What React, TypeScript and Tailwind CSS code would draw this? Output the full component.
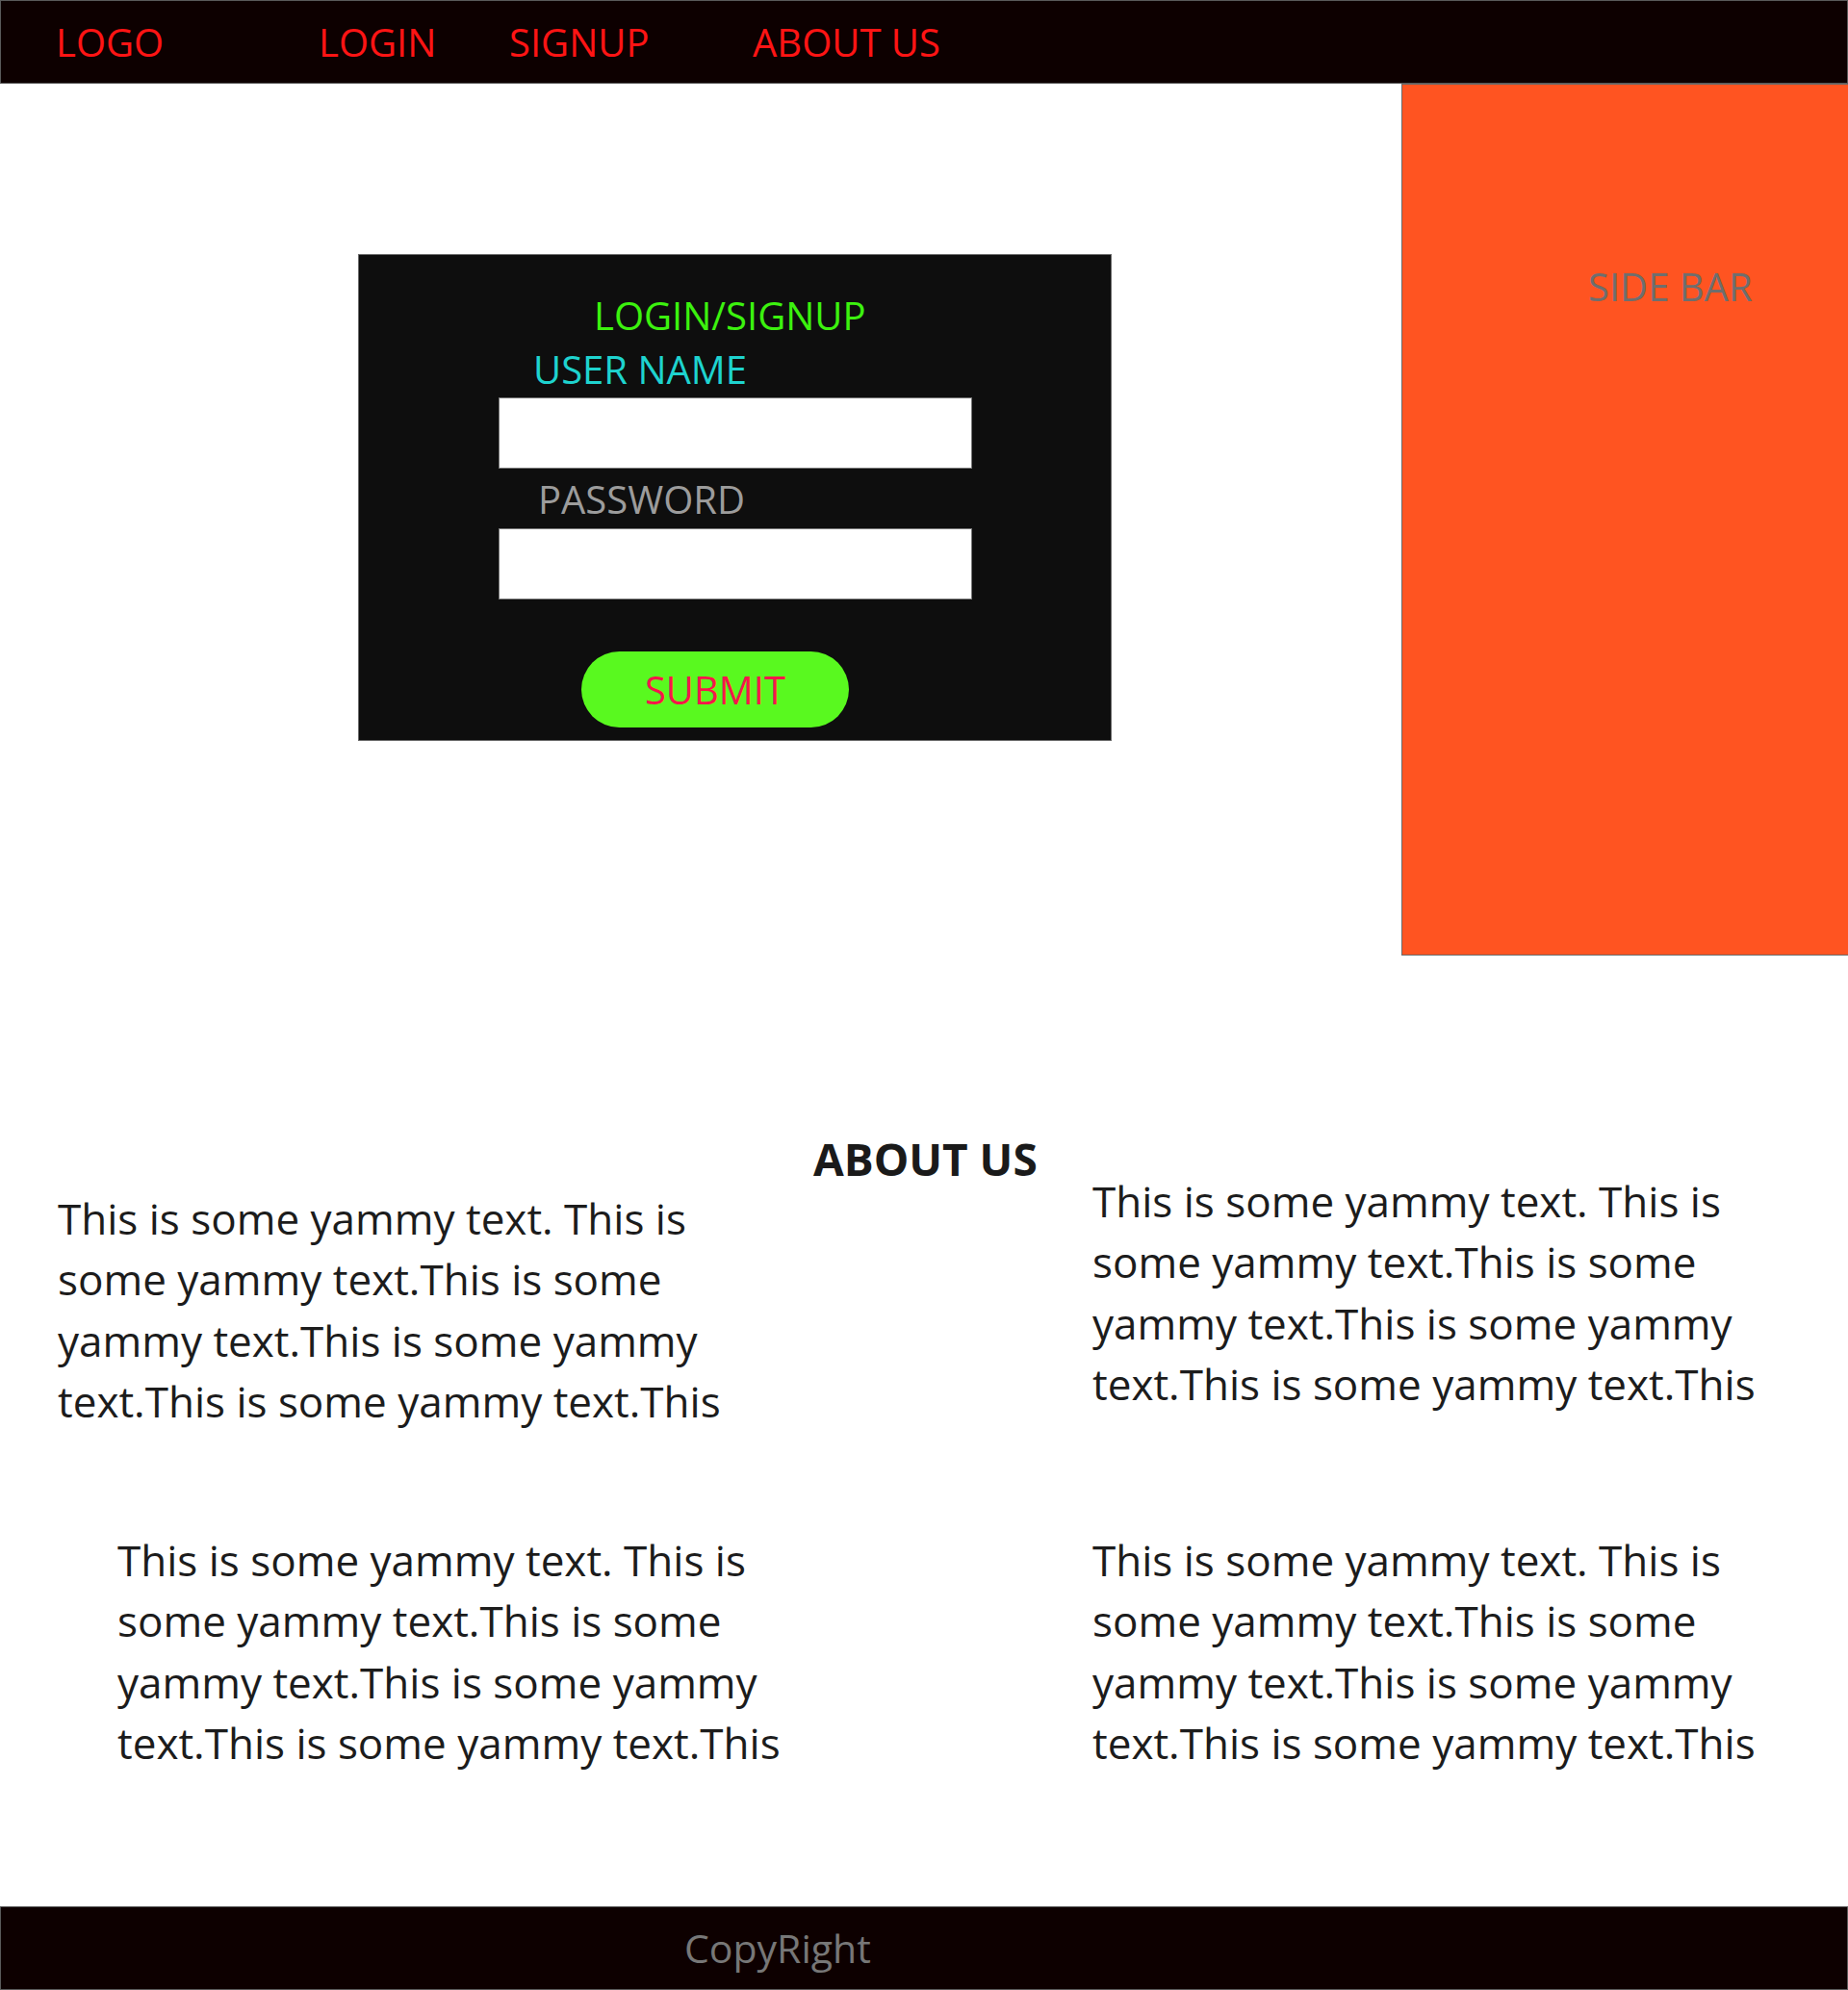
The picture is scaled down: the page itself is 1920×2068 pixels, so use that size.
const font = { fontFamily: '"Open Sans", "Noto Sans", sans-serif' };

const para = [
  'This is some yammy text. This is',
  'some yammy text.This is some',
  'yammy text.This is some yammy',
  'text.This is some yammy text.This',
];

function Yammy({ className = '' }: { className?: string }) {
  return (
    <p className={`text-[44px] leading-[63.3px] text-[#1c1c1c] whitespace-nowrap ${className}`}>
      {para.map((line, i) => (
        <span key={i} className="block">
          {line}
        </span>
      ))}
    </p>
  );
}

function Header() {
  return (
    <header className="h-[87px] bg-[#0d0000] border border-[#5a5a5a] flex items-center text-[40px] text-[#ff1414]">
      <a className="w-[330px] pl-[57px]">LOGO</a>
      <a className="w-[198px]">LOGIN</a>
      <a className="w-[253px]">SIGNUP</a>
      <a>ABOUT US</a>
    </header>
  );
}

function LoginBox() {
  return (
    <div className="w-[783px] h-[506px] bg-[#0e0e0e] border border-[#6a6a6a] flex flex-col items-start text-[40px] leading-none">
      <h2 className="ml-[244px] mt-[43px] text-[#3cf20e]">LOGIN/SIGNUP</h2>
      <label className="ml-[181px] mt-[16px] text-[#1ed3cf]">USER NAME</label>
      <input className="ml-[145px] mt-[9px] w-[492px] h-[74px] bg-white border border-[#777]" />
      <label className="ml-[186px] mt-[12px] text-[#9c9c9c]">PASSWORD</label>
      <input type="password" className="ml-[145px] mt-[10px] w-[492px] h-[74px] bg-white border border-[#777]" />
      <button className="ml-[231px] mt-[54px] w-[278px] h-[79px] rounded-full bg-[#59f91f] text-[#f5164a] text-[40px]">
        SUBMIT
      </button>
    </div>
  );
}

export default function App() {
  return (
    <div className="min-h-screen flex flex-col bg-white" style={font}>
      <Header />

      <section className="flex h-[906px]">
        <div className="flex-1 pl-[372px] pt-[177px]">
          <LoginBox />
        </div>
        <aside className="w-[464px] bg-[#ff5421] border border-[#6a6a6a] border-r-0 pt-[190px] pl-[193px]">
          <span className="text-[40px] leading-none text-[#6e6e6e]">SIDE BAR</span>
        </aside>
      </section>

      <section className="pt-[187px]">
        <div className="flex items-start">
          <div className="w-[845px] pl-[60px] pt-[55px]">
            <Yammy />
          </div>
          <h2 className="w-[290px] text-[46px] leading-[48px] font-bold text-[#1a1a1a]">ABOUT US</h2>
          <div className="pt-[37px]">
            <Yammy />
          </div>
        </div>
        <div className="flex items-start mt-[102px]">
          <div className="w-[1135px] pl-[122px]">
            <Yammy />
          </div>
          <div>
            <Yammy />
          </div>
        </div>
      </section>

      <footer className="mt-auto h-[87px] bg-[#0d0000] border border-[#5a5a5a] flex items-center pl-[710px]">
        <span className="text-[41px] text-[#777777]">CopyRight</span>
      </footer>
    </div>
  );
}
